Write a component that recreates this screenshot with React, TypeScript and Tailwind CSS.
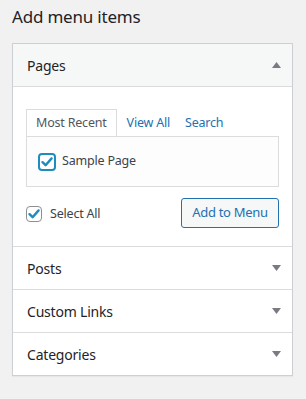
const font = { fontFamily: '"Noto Sans", "Open Sans", sans-serif' };

const Arrow = ({ up }: { up?: boolean }) => (
  <svg width="9" height="6" viewBox="0 0 9 6" className="mr-[11px]">
    {up ? (
      <path d="M4.5 0 L9 6 L0 6 Z" fill="#787c82" />
    ) : (
      <path d="M0 0 L9 0 L4.5 6 Z" fill="#787c82" />
    )}
  </svg>
);

const Check = ({ focused }: { focused?: boolean }) => (
  <span
    className={
      focused
        ? "flex items-center justify-center w-[18px] h-[18px] rounded-[4px] border-2 border-[#1e8cbe] bg-white"
        : "flex items-center justify-center w-4 h-4 rounded-[4px] border border-[#8c8f94] bg-white"
    }
  >
    <svg width="14" height="14" viewBox="0 0 14 14">
      <path
        d="M2.5 7.2 L5.6 10.2 L11.6 3.4"
        fill="none"
        stroke="#1e8cbe"
        strokeWidth="2.4"
        strokeLinecap="round"
        strokeLinejoin="round"
      />
    </svg>
  </span>
);

const Section = ({ title, last }: { title: string; last?: boolean }) => (
  <div
    className={
      last
        ? "h-[42px] flex items-center justify-between pl-[14px] bg-white"
        : "h-[43px] flex items-center justify-between border-b border-[#dcdcde] pl-[14px] bg-white"
    }
  >
    <span className="text-[14px] tracking-[-0.2px] text-[#1d2327]">{title}</span>
    <Arrow />
  </div>
);

export default function App() {
  return (
    <div className="w-[306px] h-[399px] bg-[#f1f1f1] px-3 pt-[5px]" style={font}>
      <h2 className="text-[17px] leading-[24px] tracking-[-0.2px] text-[#1d2327] mb-[14px]">Add menu items</h2>
      <div className="w-[281px] border border-[#ccd0d4] shadow-[0_1px_1px_rgba(0,0,0,0.04)] bg-white">
        <div className="h-[43px] flex items-center justify-between border-b border-[#dcdcde] pl-[14px] bg-[#f6f7f7]">
          <span className="text-[14px] tracking-[-0.2px] text-[#1d2327]">Pages</span>
          <Arrow up />
        </div>
        <div className="border-b border-[#dcdcde] pt-[23px] px-[13px] pb-[18px]">
          <div className="flex items-end text-[12.5px] tracking-[-0.2px] h-[26px]">
            <div className="h-[27px] px-[9px] flex items-center border border-b-0 border-[#dcdcde] bg-white text-[#50575e] relative z-10">
              Most Recent
            </div>
            <a className="ml-[10px] h-[26px] flex items-center text-[#2271b1]">View All</a>
            <a className="ml-[15px] h-[26px] flex items-center text-[#2271b1]">Search</a>
          </div>
          <div className="h-[51px] border border-[#dcdcde] bg-[#fdfdfd] flex items-center pl-[11px] gap-[6px]">
            <Check focused />
            <span className="text-[12.5px] tracking-[-0.2px] text-[#3c434a]">Sample Page</span>
          </div>
          <div className="flex items-center justify-between mt-[11px]">
            <label className="flex items-center gap-2 text-[12.5px] tracking-[-0.2px] text-[#3c434a] mt-[2px]">
              <Check />
              Select All
            </label>
            <button className="h-[30px] w-[98px] rounded-[3px] border border-[#2271b1] bg-[#f6f7f7] text-[13px] tracking-[-0.3px] text-[#2271b1]">
              Add to Menu
            </button>
          </div>
        </div>
        <Section title="Posts" />
        <Section title="Custom Links" />
        <Section title="Categories" last />
      </div>
    </div>
  );
}
